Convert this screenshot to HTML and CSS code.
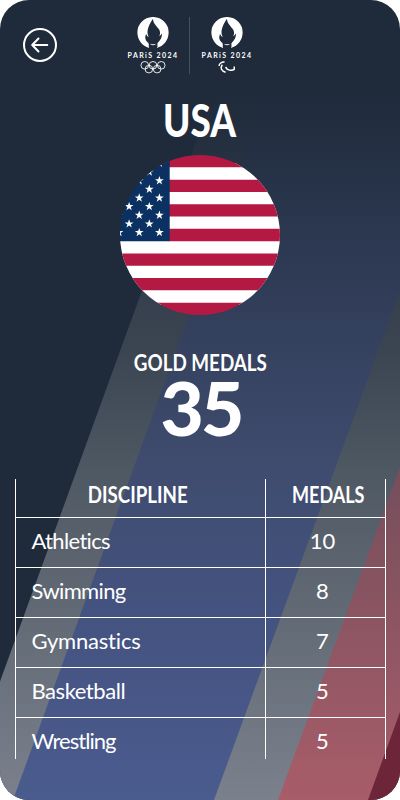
FILE: index.html
```html
<!DOCTYPE html>
<html lang="en">
<head>
<meta charset="utf-8">
<title>USA – Gold medals</title>
<link rel="stylesheet" href="styles.css">
</head>
<body>
<main class="screen">
  <svg class="backdrop" viewBox="0 0 400 800" aria-hidden="true">
    <defs>
      <linearGradient id="grey" gradientUnits="userSpaceOnUse" x1="0" y1="95" x2="0" y2="800">
        <stop offset="0" stop-color="#1f2a3b"/>
        <stop offset=".36" stop-color="#3b4552"/>
        <stop offset=".53" stop-color="#4e5863"/>
        <stop offset=".75" stop-color="#636b76"/>
        <stop offset="1" stop-color="#7a818c"/>
      </linearGradient>
      <linearGradient id="blue" gradientUnits="userSpaceOnUse" x1="0" y1="95" x2="0" y2="800">
        <stop offset="0" stop-color="#1f2a3b"/>
        <stop offset=".2" stop-color="#2c3850"/>
        <stop offset=".53" stop-color="#3f4c6f"/>
        <stop offset=".75" stop-color="#455381"/>
        <stop offset="1" stop-color="#4a5b8e"/>
      </linearGradient>
      <linearGradient id="red" gradientUnits="userSpaceOnUse" x1="0" y1="467" x2="0" y2="800">
        <stop offset="0" stop-color="#754e5c"/>
        <stop offset="1" stop-color="#a85d69"/>
      </linearGradient>
    </defs>
    <path fill="url(#grey)" d="M-43 800 213 95H275L19 800Z"/>
    <path fill="url(#blue)" d="M13 800 269 95H400V300L217 800Z"/>
    <path fill="url(#grey)" d="M214 800 400 291V472L282 800Z"/>
    <path fill="url(#red)" d="M278 800 400 467V720L372 800Z"/>
    <path fill="#6d2639" d="M368 800 400 712V800Z"/>
  </svg>

  <header class="top">
    <a class="back" href="#" aria-label="Back">
      <svg viewBox="0 0 34 34"><circle cx="17" cy="17" r="16"/><path d="M24.3 17H9.5M15.5 10.5 9.2 17l6.3 6.5"/></svg>
    </a>
    <div class="logos">
      <div class="logo">
        <svg class="flame" viewBox="0 0 96 96">
          <defs><g id="flame"><path fill="#fff" d="M46 0H50A48 47 0 0 1 96 47C96 72 80 90 60 95C64 90 60 86 62 80C70 72 77 62 75 50C74 54 70 58 67 59C70 54 72 45 65 36C58 26 48 18 48 5C37 22 25 42 35 61C31 60 29 57 27 52C22 62 24 72 34 80C36 84 34 90 36 95C15 90 0 70 0 47A48 47 0 0 1 46 0Z"/><path fill="#fff" d="M38 82Q44 84 48 84Q52 84 58 82Q48 92 38 82Z"/></g></defs>
          <use href="#flame"/>
        </svg>
        <span class="paris">PARiS 2024</span>
        <svg class="mark" viewBox="0 0 26 13"><g fill="none" stroke="#fff" stroke-width=".9"><circle cx="4.6" cy="4.4" r="3.9"/><circle cx="13" cy="4.4" r="3.9"/><circle cx="21.4" cy="4.4" r="3.9"/><circle cx="8.8" cy="8.3" r="3.9"/><circle cx="17.2" cy="8.3" r="3.9"/></g></svg>
      </div>
      <div class="logo second">
        <svg class="flame" viewBox="0 0 96 96"><use href="#flame"/></svg>
        <span class="paris">PARiS 2024</span>
        <svg class="mark" viewBox="0 0 26 13"><g fill="none" stroke="#fff" stroke-width="1.5"><path d="M10.5 1.1C7.5.8 5 2.6 4.9 5.2"/><path d="M8.2 3.9C5.8 7 7.2 10.6 11.6 11.4"/><path d="M11.8 5.9C12.5 9.6 18 10.4 20.4 8.6V5.6"/></g></svg>
      </div>
    </div>
  </header>

  <h1 class="country"><span>USA</span></h1>

  <svg class="flag" viewBox="0 0 160 160" role="img" aria-label="Flag of the USA">
    <defs>
      <clipPath id="round"><circle cx="80" cy="80" r="80"/></clipPath>
      <path id="s" fill="#fff" d="M0-4.6 1.1-1.4 4.4-1.4 1.7.6 2.7 3.8 0 1.8-2.7 3.8-1.7.6-4.4-1.4-1.1-1.4Z"/>
    </defs>
    <g clip-path="url(#round)">
      <path fill="#fff" d="M49 8H160V150H0V86H49Z"/>
      <path stroke="#b31942" stroke-width="12.3" d="M0 6.15H160M49 30.8H160M49 55.4H160M49 80H160M0 104.6H160M0 129.2H160M0 153.9H160"/>
      <path fill="#0a3161" d="M0 0H49.7V86.2H0Z"/>
      <use href="#s" x="39.4" y="77.5"/><use href="#s" x="39.4" y="60.2"/><use href="#s" x="39.4" y="42.9"/><use href="#s" x="39.4" y="25.6"/><use href="#s" x="39.4" y="8.3"/>
      <use href="#s" x="29.3" y="68.8"/><use href="#s" x="29.3" y="51.5"/><use href="#s" x="29.3" y="34.2"/><use href="#s" x="29.3" y="16.9"/>
      <use href="#s" x="19.2" y="77.5"/><use href="#s" x="19.2" y="60.2"/><use href="#s" x="19.2" y="42.9"/><use href="#s" x="19.2" y="25.6"/>
      <use href="#s" x="9.1" y="68.8"/><use href="#s" x="9.1" y="51.5"/><use href="#s" x="9.1" y="34.2"/>
      <use href="#s" x="-1" y="77.5"/><use href="#s" x="-1" y="60.2"/>
    </g>
  </svg>

  <section class="total">
    <h2 class="label"><span>GOLD MEDALS</span></h2>
    <p class="count"><span>35</span></p>
  </section>

  <section class="table">
    <div class="row head"><div class="cell"><span class="w-discipline">DISCIPLINE</span></div><div class="cell"><span class="w-medals">MEDALS</span></div></div>
    <div class="row"><div class="cell"><span class="tight">Athletics</span></div><div class="cell"><span>10</span></div></div>
    <div class="row"><div class="cell"><span class="tight">Swimming</span></div><div class="cell"><span>8</span></div></div>
    <div class="row"><div class="cell"><span class="normal">Gymnastics</span></div><div class="cell"><span>7</span></div></div>
    <div class="row"><div class="cell"><span class="snug">Basketball</span></div><div class="cell"><span>5</span></div></div>
    <div class="row"><div class="cell"><span class="tighter">Wrestling</span></div><div class="cell"><span>5</span></div></div>
  </section>
</main>
</body>
</html>
```
FILE: styles.css
```css
* { box-sizing: border-box; margin: 0; padding: 0; }
body { background: #fff; font-family: Lato, "Liberation Sans", sans-serif; color: #fff; font-variant-ligatures: none; }
svg { display: block; }
.screen { position: relative; width: 400px; height: 800px; overflow: hidden; border-radius: 29px; background: #1f2a3b; display: flex; flex-direction: column; align-items: center; isolation: isolate; }
.backdrop { position: absolute; inset: 0; width: 400px; height: 800px; z-index: -1; }
.top { width: 100%; height: 90px; padding: 17px 0 0 23px; display: flex; }
.back { width: 34px; height: 34px; margin-top: 11px; }
.back svg { fill: none; stroke: #fff; stroke-width: 2; stroke-linecap: round; stroke-linejoin: round; }
.logos { display: flex; margin-left: 59px; height: 57px; }
.logo { width: 73px; display: flex; flex-direction: column; align-items: center; }
.logo.second { width: 74px; border-left: 1px solid #46505e; }
.flame { width: 32px; height: 32px; }
.paris { font: 700 7px/8px Lato, sans-serif; letter-spacing: 1.4px; margin: 3px -5px 0 -4px; white-space: nowrap; }
.mark { width: 26px; height: 13px; margin-top: 2px; }
h1 span, h2 span, p span, .cell span { display: inline-block; white-space: nowrap; }
.country { height: 65px; padding-top: 6px; font-size: 46px; line-height: 48px; font-weight: 900; }
.country span { transform: scaleX(.8); }
.flag { width: 160px; height: 160px; }
.total { height: 164px; padding-top: 35px; text-align: center; }
.label { font-size: 22px; line-height: 26px; font-weight: 700; }
.label span { transform: translateX(.5px) scaleX(.855); }
.count { font-size: 74px; line-height: 64px; font-weight: 900; }
.count span { transform: translateX(1px) scaleX(1.01); letter-spacing: -3px; }
.table { width: 371px; border: solid #fff; border-width: 0 1px; margin-left: 1px; }
.row { display: grid; grid-template-columns: 249px 120px; height: 50px; border-bottom: 1px solid #fff; font-size: 22px; line-height: 26px; }
.cell { padding: 10px 0 0 15.5px; }
.cell + .cell { border-left: 1px solid #fff; padding-left: 0; padding-right: 6px; text-align: center; }
.tight { letter-spacing: -.65px; }
.tighter { letter-spacing: -.95px; }
.snug { letter-spacing: -.45px; }
.normal { letter-spacing: -.2px; }
.row.head { height: 39px; font-weight: 700; }
.head .cell { padding: 3px 6px 0 0; text-align: center; }
.head .cell + .cell { padding: 3px 0 0 6px; }
.w-discipline { transform: scaleX(.85); }
.w-medals { transform: scaleX(.82); }
.row:last-child { height: 41px; border-bottom: 0; }
```
